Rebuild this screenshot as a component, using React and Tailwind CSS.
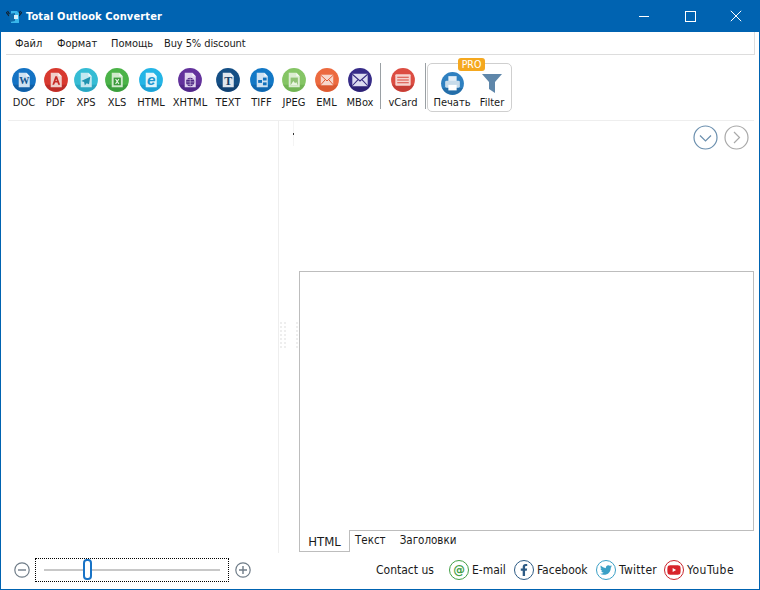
import React from "react";
import { FaTwitter, FaYoutube, FaFacebookF } from "react-icons/fa";

const font = "font-['DejaVu_Sans_Condensed','Liberation_Sans',sans-serif]";

function Page({ fill = "#cfe2f2", children }) {
  return (
    <>
      <path d="M7 5h8l3.5 3.5V20H7z" fill={fill} />
      <path d="M15 5v3.5h3.5z" fill="#ffffff" opacity="0.7" />
      {children}
    </>
  );
}

const glyphs = {
  DOC: (
    <Page>
      <text x="12.7" y="17" textAnchor="middle" fontSize="10.5" fontWeight="700" fontFamily="Liberation Serif" fill="#12558f">W</text>
    </Page>
  ),
  PDF: (
    <Page fill="#f0cfc9">
      <path d="M11.8 8.5h1.8l3.2 9h-2l-.8-2.5h-2.4l-1.1 2.5H8.7zM12.7 11.5l-.7 2h1.4z" fill="#c72b26" />
    </Page>
  ),
  XPS: (
    <Page fill="#c4e8f0">
      <path d="M17 9L7.5 13.5l3 1.2.8 3.5 1.9-2.3 2.4 1z" fill="#1f93b0" />
    </Page>
  ),
  XLS: (
    <Page fill="#cfe9cc">
      <rect x="9" y="10" width="7.5" height="8" fill="#3a9a3a" />
      <path d="M11 11.5l3.5 5M14.5 11.5l-3.5 5" stroke="#e8f6e6" strokeWidth="1.1" />
    </Page>
  ),
  HTML: (
    <Page fill="#e2f5fc">
      <text x="12.7" y="18" textAnchor="middle" fontSize="16" fontStyle="italic" fontWeight="700" fontFamily="Liberation Sans" fill="#1a96cf">e</text>
    </Page>
  ),
  XHTML: (
    <Page fill="#dfd4ee">
      <circle cx="12.7" cy="14.5" r="4.4" fill="#4b2582" />
      <path d="M8.3 14.5h8.8M12.7 10.1v8.8M9.2 12h7M9.2 17h7" stroke="#d8cdea" strokeWidth="0.6" />
    </Page>
  ),
  TEXT: (
    <Page fill="#dfe6ee">
      <text x="12.7" y="18" textAnchor="middle" fontSize="12.5" fontWeight="700" fontFamily="Liberation Serif" fill="#143f69">T</text>
    </Page>
  ),
  TIFF: (
    <Page>
      <rect x="8.5" y="12.5" width="4" height="3" fill="#1170bb" />
      <rect x="13.5" y="10" width="3.8" height="3" fill="#1170bb" />
      <rect x="13.5" y="15" width="3.8" height="3" fill="#1170bb" />
    </Page>
  ),
  JPEG: (
    <Page fill="#dcedd2">
      <rect x="9" y="10" width="7.5" height="8" fill="#8fc274" />
      <path d="M9 18l2.8-4.5 1.9 2.3 1.1-1.3 1.7 3.5z" fill="#e8f5e0" />
    </Page>
  ),
  EML: (
    <>
      <rect x="6" y="7" width="13" height="11" fill="#f7d8cc" />
      <path d="M6 7.5l6.5 6 6.5-6M6 17.5l4.8-5.5M19 17.5L14.2 12" fill="none" stroke="#e0552c" strokeWidth="1" />
    </>
  ),
  MBox: (
    <>
      <rect x="4.5" y="6" width="16" height="13" fill="#dcdcf0" />
      <path d="M4.5 6.5l8 7 8-7M4.5 18.5l6-6.5M20.5 18.5l-6-6.5" fill="none" stroke="#35297f" strokeWidth="1.1" />
    </>
  ),
  vCard: (
    <>
      <rect x="4.5" y="6.5" width="16" height="12" rx="1" fill="#f6d4cf" />
      <path d="M6.5 9.7h12M6.5 12.5h12M6.5 15.3h12" stroke="#d8483e" strokeWidth="1.1" />
    </>
  ),
};

function FormatIcon({ name, color, edge }) {
  return (
    <svg width="24" height="24" viewBox="0 0 25 25" className="block">
      <circle cx="12.5" cy="12.5" r="12.4" fill={color} />
      <path d="M1.2 17.5a12.4 12.4 0 0 0 22.6 0z" fill={edge} opacity="0.55" />
      {glyphs[name]}
    </svg>
  );
}

function PrintIcon() {
  return (
    <svg width="23" height="23" viewBox="0 0 25 25" className="block">
      <circle cx="12.5" cy="12.5" r="12.4" fill="#2f80c0" />
      <path d="M1.2 17.5a12.4 12.4 0 0 0 22.6 0z" fill="#1c5f96" opacity="0.55" />
      <rect x="8" y="4.5" width="9" height="5.5" fill="#e4eef6" />
      <rect x="4.5" y="9.5" width="16" height="7.5" rx="1.5" fill="#c7dbea" />
      <rect x="8" y="14" width="9" height="6" fill="#ffffff" />
    </svg>
  );
}

function FilterIcon() {
  return (
    <svg width="20" height="19" viewBox="0 0 20 19" className="block">
      <path d="M0 0h20l-7 8v11l-6-4V8z" fill="#5f87aa" />
    </svg>
  );
}

const tools = [
  ["DOC", "w-[32px]", "#1473c4", "#0c4f8e"],
  ["PDF", "w-[31px]", "#d8392f", "#a82321"],
  ["XPS", "w-[30px]", "#35bcd4", "#1f93b0"],
  ["XLS", "w-[32px]", "#4bb348", "#2f8d36"],
  ["HTML", "w-[36px]", "#24b5e6", "#1590c4"],
  ["XHTML", "w-[42px]", "#63329c", "#44207a"],
  ["TEXT", "w-[34px]", "#154f85", "#0e3762"],
  ["TIFF", "w-[33px]", "#1278c6", "#0c5a9c"],
  ["JPEG", "w-[32px]", "#85c565", "#62a547"],
  ["EML", "w-[33px]", "#ec6a3f", "#cd4c26"],
  ["MBox", "w-[34px]", "#372c88", "#261c66"],
];

function Tool({ label, width, children }) {
  return (
    <div className={`${width} flex flex-col items-center shrink-0`}>
      <div className="h-[25px] flex items-center justify-center">{children}</div>
      <div className="mt-[3px] text-[11px] leading-[16px] text-[#1a1a1a] whitespace-nowrap">{label}</div>
    </div>
  );
}

function ProTool({ label, width, children }) {
  return (
    <div className={`${width} flex flex-col items-center shrink-0`}>
      <div className="h-[23px] flex items-center justify-center">{children}</div>
      <div className="mt-0 text-[11px] leading-[16px] text-[#1a1a1a] whitespace-nowrap">{label}</div>
    </div>
  );
}

function Toolbar() {
  return (
    <div className="h-[66px] ml-[7px] mr-[5px] border-b border-[#eeeeee] flex items-start">
      <div className="flex pt-[12px]">
        {tools.map(([n, w, c, e]) => (
          <Tool key={n} label={n} width={w}>
            <FormatIcon name={n} color={c} edge={e} />
          </Tool>
        ))}
      </div>
      <div className="w-px h-[46px] bg-[#9aa0a4] mt-[8px] ml-[3px]" />
      <div className="flex pt-[12px] ml-[4px]">
        <Tool label="vCard" width="w-[36px]">
          <FormatIcon name="vCard" color="#dc4d42" edge="#b5322b" />
        </Tool>
      </div>
      <div className="w-px h-[46px] bg-[#9aa0a4] mt-[8px] ml-[4px]" />
      <div className="relative ml-[1px] mt-[8px] w-[85px] h-[49px] border border-[#cfcfcf] rounded-[5px] flex items-start pt-[8px] pl-[2px]">
        <div className="absolute left-[30px] top-[-6px] w-[27px] h-[13px] bg-[#f5a81f] rounded-[3px] text-white text-[10.5px] leading-[13px] text-center">PRO</div>
        <ProTool label="Печать" width="w-[44px]">
          <PrintIcon />
        </ProTool>
        <ProTool label="Filter" width="w-[36px]">
          <FilterIcon />
        </ProTool>
      </div>
    </div>
  );
}

function TitleBar() {
  return (
    <div className="h-[32px] bg-[#0063b1] flex items-center text-white shrink-0">
      <svg width="16" height="14" viewBox="0 0 16 14" className="ml-[5px] mt-[1px] block">
        <path d="M0 2l3 4M1.5 1l2.5 4M16 2l-3 4M14.5 1L12 5" stroke="#13202c" strokeWidth="1.2" />
        <path d="M5 1h6l2 2v10H5z" fill="#39b6ea" />
        <path d="M3 4l6-1v8l-5 1z" fill="#0f6cab" />
        <rect x="8" y="5" width="4" height="4" fill="#d5effa" />
      </svg>
      <div className="ml-[4px] mt-[2px] text-[11px] font-bold tracking-[0.13px] whitespace-nowrap">Total Outlook Converter</div>
      <div className="ml-auto flex items-center">
        <div className="w-[46px] h-[32px] flex items-center justify-center">
          <div className="w-[10px] h-px bg-white" />
        </div>
        <div className="w-[46px] h-[32px] flex items-center justify-center">
          <div className="w-[11px] h-[11px] border border-white" />
        </div>
        <div className="w-[46px] h-[32px] flex items-center justify-center">
          <svg width="12" height="12" viewBox="0 0 12 12" className="block">
            <path d="M.8.8l10.4 10.4M11.2.8L.8 11.2" stroke="#fff" strokeWidth="1" />
          </svg>
        </div>
      </div>
    </div>
  );
}

function Menu() {
  return (
    <div className="h-[23px] ml-[5px] mr-[4px] pt-[2px] border-b border-r border-[#dddddd] flex items-center text-[11px] text-[#1a1a1a]">
      <span className="ml-[9px] w-[26px] whitespace-nowrap">Файл</span>
      <span className="ml-[16px] w-[38px] whitespace-nowrap">Формат</span>
      <span className="ml-[16px] w-[40px] whitespace-nowrap">Помощь</span>
      <span className="ml-[13px] whitespace-nowrap tracking-[-0.1px]">Buy 5% discount</span>
    </div>
  );
}

function Grip() {
  const rows = [0, 1, 2, 3, 4, 5, 6];
  return (
    <svg width="19" height="28" viewBox="0 0 19 28" className="block">
      {rows.map((r) => (
        <g key={r} fill="#eeeeee">
          <rect x="1" y={r * 4} width="2" height="2" />
          <rect x="5" y={r * 4} width="2" height="2" />
          <rect x="17" y={r * 4} width="2" height="2" />
        </g>
      ))}
    </svg>
  );
}

function RoundNav({ color, d }) {
  return (
    <svg width="25" height="25" viewBox="0 0 25 25" className="block">
      <circle cx="12.5" cy="12.5" r="11.5" fill="none" stroke={color} strokeWidth="1.2" />
      <path d={d} fill="none" stroke={color} strokeWidth="1.2" />
    </svg>
  );
}

function Main() {
  return (
    <div className="h-[432px] flex">
      <div className="w-[278px] border-r border-[#eeeeee] shrink-0" />
      <div className="w-[20px] shrink-0 flex flex-col">
        <div className="ml-[14px] w-px h-[25px] flex flex-col bg-[#f4f4f4]">
          <div className="h-[12px]" />
          <div className="w-px h-[2px] bg-[#333]" />
        </div>
        <div className="mt-[176px]">
          <Grip />
        </div>
      </div>
      <div className="w-[455px] shrink-0 flex flex-col">
        <div className="h-[150px] flex justify-end items-start pt-[4px] gap-[6px] pr-[5px]">
          <RoundNav color="#6b8fae" d="M7 10.5l5.5 5.5 5.5-5.5" />
          <RoundNav color="#a9a9a9" d="M10 7l5.5 5.5L10 18" />
        </div>
        <div className="h-[260px] border border-[#bdbdbd]" />
        <div className="flex items-start text-[11.5px] text-[#1a1a1a]">
          <div className="w-[51px] h-[22px] mt-[-1px] bg-white border-x border-b border-[#bdbdbd] text-center leading-[22px] pt-[1px] text-[13px]">HTML</div>
          <span className="ml-[5px] leading-[18px]">Текст</span>
          <span className="ml-[14px] leading-[18px]">Заголовки</span>
        </div>
      </div>
    </div>
  );
}

function Ring({ color, children }) {
  return (
    <div className={`w-[20px] h-[20px] rounded-full border-[1.5px] flex items-center justify-center shrink-0 ${color}`}>
      {children}
    </div>
  );
}

function RoundSign({ plus }) {
  return (
    <svg width="16" height="16" viewBox="0 0 16 16" className="block">
      <circle cx="8" cy="8" r="7.2" fill="none" stroke="#6f7c88" strokeWidth="1.2" />
      <path d={plus ? "M4 8h8M8 4v8" : "M4 8h8"} stroke="#6f7c88" strokeWidth="1.4" />
    </svg>
  );
}

function Footer() {
  return (
    <div className="h-[36px] pb-[3px] flex items-center text-[12px] text-[#1a1a1a] whitespace-nowrap">
      <div className="ml-[13px]">
        <RoundSign />
      </div>
      <div className="ml-[5px] w-[194px] h-[24px] border border-dotted border-black flex items-center px-[8px] gap-0">
        <div className="h-[2px] w-[39px] bg-[#c8c8c8]" />
        <div className="w-[9px] h-[21px] rounded-[4px] border-[2px] border-[#1873c6] bg-white shrink-0" />
        <div className="h-[2px] w-[128px] bg-[#c8c8c8]" />
      </div>
      <div className="ml-[6px]">
        <RoundSign plus />
      </div>
      <div className="ml-[125px] w-[57px]">Contact us</div>
      <div className="ml-[16px]">
        <Ring color="border-[#43a047]">
          <span className="text-[#43a047] text-[13px] leading-[13px] font-bold">@</span>
        </Ring>
      </div>
      <div className="ml-[3px] w-[34px]">E-mail</div>
      <div className="ml-[8px]">
        <Ring color="border-[#2d5b85]">
          <FaFacebookF className="text-[#2d5b85] text-[12px]" />
        </Ring>
      </div>
      <div className="ml-[3px] w-[51px]">Facebook</div>
      <div className="ml-[8px]">
        <Ring color="border-[#3aa0c6]">
          <FaTwitter className="text-[#3aa0c6] text-[12px]" />
        </Ring>
      </div>
      <div className="ml-[3px] w-[38px] tracking-[0.3px]">Twitter</div>
      <div className="ml-[7px]">
        <Ring color="border-[#c9252c]">
          <FaYoutube className="text-[#d8232a] text-[14px]" />
        </Ring>
      </div>
      <div className="ml-[3px] tracking-[0.5px]">YouTube</div>
    </div>
  );
}

export default function App() {
  return (
    <div className={`w-[760px] h-[590px] bg-white border-x border-b border-[#0063b1] flex flex-col overflow-hidden ${font}`}>
      <TitleBar />
      <Menu />
      <Toolbar />
      <Main />
      <Footer />
    </div>
  );
}
